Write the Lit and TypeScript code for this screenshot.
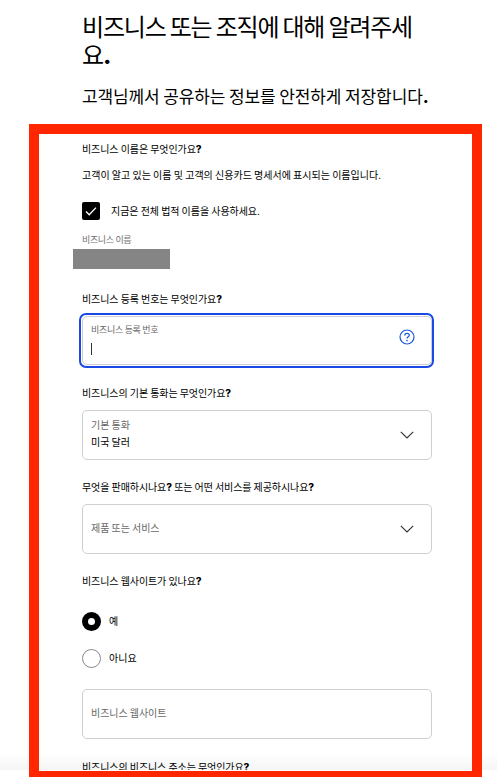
import { LitElement, html, css, svg, nothing } from "lit";
import { customElement, property } from "lit/decorators.js";

const textBase = css`
  * { box-sizing: border-box; }
  b { font-family: Inter, "Noto Sans CJK KR", sans-serif; font-weight: 800; line-height: 0; }
`;

@customElement("form-question")
class FormQuestion extends LitElement {
  @property() text = "";
  static styles = [textBase, css`
    :host { display: block; height: 20px; line-height: 20px; font-size: 10px; letter-spacing: -0.08px; color: #000; white-space: nowrap; }
  `];
  render() {
    return this.text.split(/(\?)/).map((part) => (part === "?" ? html`<b>?</b>` : part));
  }
}

@customElement("form-field")
class FormField extends LitElement {
  @property() label = "";
  @property() value = "";
  @property() icon = "";
  @property({ type: Boolean, reflect: true }) focused = false;
  static styles = [textBase, css`
    :host { display: block; }
    .box { position: relative; display: flex; align-items: center; justify-content: space-between; height: 50px; border: 1px solid #cfcfcf; border-radius: 5px; padding: 0 16px 0 8px; background: #fff; }
    :host([focused]) .box { height: 49px; }
    :host([focused]) .box::before { content: ""; position: absolute; inset: -4px -3px -4px -4px; border: 2px solid #1a49e6; border-radius: 7px; }
    .text { display: flex; flex-direction: column; padding-bottom: 3px; line-height: 17px; font-size: 10px; letter-spacing: -0.05px; white-space: nowrap; color: #000; }
    .filled { padding-bottom: 5px; }
    :host([focused]) .text { padding-bottom: 6px; }
    .label { color: #686868; }
    :host([focused]) .label { font-size: 9px; letter-spacing: -0.3px; }
    .caret { width: 1px; height: 12px; margin: 5px 0 0 0; background: #333; }
    svg { display: block; fill: none; }
    .chevron { stroke: #333; stroke-width: 1.15; }
    .help { stroke: #1557dc; stroke-width: 1.2; margin-top: -8px; }
    .dot { fill: #1557dc; stroke: none; }
  `];
  private glyph() {
    if (this.icon === "help")
      return html`<svg class="help" width="16" height="16" viewBox="0 0 16 16">${svg`<circle cx="8" cy="8" r="7"/><path d="M5.8 6.6V6.2C5.8 5 6.7 4.3 8 4.3S10.3 5.1 10.3 6.2C10.3 7.8 8 7.7 8 9.5"/><circle class="dot" cx="8" cy="11.6" r=".8"/>`}</svg>`;
    if (this.icon === "chevron")
      return html`<svg class="chevron" width="16" height="16" viewBox="0 0 16 16"><path d="M1.8 4.8 8 11l6.2-6.2"/></svg>`;
    return nothing;
  }
  render() {
    return html`<div class="box">
      <div class="text ${this.value ? "filled" : ""}">
        <span class="label">${this.label}</span>
        ${this.value ? html`<span>${this.value}</span>` : nothing}
        ${this.focused ? html`<span class="caret"></span>` : nothing}
      </div>
      ${this.glyph()}
    </div>`;
  }
}

@customElement("form-radio")
class FormRadio extends LitElement {
  @property() label = "";
  @property({ type: Boolean, reflect: true }) checked = false;
  static styles = [textBase, css`
    :host { display: flex; align-items: center; gap: 8px; height: 19px; font-size: 10px; line-height: 17px; }
    .ring { width: 19px; height: 19px; border: 1px solid #888; border-radius: 50%; background: #fff; }
    :host([checked]) .ring { border: 6px solid #000; }
    .label { padding-bottom: 2px; }
  `];
  render() {
    return html`<span class="ring"></span><span class="label">${this.label}</span>`;
  }
}

@customElement("app-root")
class AppRoot extends LitElement {
  static styles = [textBase, css`
    :host { display: block; position: relative; height: 777px; overflow: hidden; background: #fff; color: #000; font-family: "Noto Sans CJK KR", sans-serif; }
    .page { height: 770px; overflow: hidden; padding: 12px 65px 0 82px; background: linear-gradient(#fff 752px, #f6f6f6 770px); }
    h1, h2, p { margin: 0; font-weight: 400; white-space: nowrap; }
    h1 { font-size: 24px; line-height: 28px; letter-spacing: -1.2px; }
    h2 { margin-top: 18px; font-size: 17px; line-height: 20px; letter-spacing: -0.12px; }
    .first { margin-top: 33px; }
    .desc { margin-top: 6px; font-size: 10px; line-height: 20px; letter-spacing: 0; }
    .check { display: flex; align-items: center; gap: 11px; height: 18px; margin-top: 17px; font-size: 10px; line-height: 18px; letter-spacing: -0.05px; }
    .check span { padding-bottom: 1px; }
    .check svg { display: block; width: 18px; height: 18px; border-radius: 2px; background: #000; fill: none; stroke: #fff; stroke-width: 1.3; }
    .name { margin-top: 11px; height: 17px; font-size: 9px; line-height: 17px; letter-spacing: -0.35px; color: #707070; }
    .redacted { width: 97px; height: 20px; margin: 1px 0 0 -9px; background: #858585; }
    .q2 { margin-top: 20px; }
    .f2 { margin-top: 7px; }
    .q3 { margin-top: 18px; }
    .f3 { margin-top: 7px; }
    .q4 { margin-top: 17px; }
    .last { margin-top: 18px; }
    .radios { display: flex; flex-direction: column; gap: 18px; margin: 21px 0 21px; }
    .frame { position: absolute; left: 29px; top: 124px; width: 453px; height: 653px; border: 10px solid #ff2600; border-bottom-width: 6px; }
  `];
  render() {
    return html`
      <div class="page">
        <h1>비즈니스 또는 조직에 대해 알려주세<br>요<b>.</b></h1>
        <h2>고객님께서 공유하는 정보를 안전하게 저장합니다<b>.</b></h2>
        <form-question class="first" text="비즈니스 이름은 무엇인가요?"></form-question>
        <p class="desc">고객이 알고 있는 이름 및 고객의 신용카드 명세서에 표시되는 이름입니다.</p>
        <div class="check">
          <svg viewBox="0 0 18 18"><path d="M4 9.5 7.2 12.7 14 5.6"/></svg>
          <span>지금은 전체 법적 이름을 사용하세요.</span>
        </div>
        <div class="name">비즈니스 이름</div>
        <div class="redacted"></div>
        <form-question class="q2" text="비즈니스 등록 번호는 무엇인가요?"></form-question>
        <form-field class="f2" label="비즈니스 등록 번호" icon="help" focused></form-field>
        <form-question class="q3" text="비즈니스의 기본 통화는 무엇인가요?"></form-question>
        <form-field class="f3" label="기본 통화" value="미국 달러" icon="chevron"></form-field>
        <form-question class="q4" text="무엇을 판매하시나요? 또는 어떤 서비스를 제공하시나요?"></form-question>
        <form-field class="f3" label="제품 또는 서비스" icon="chevron"></form-field>
        <form-question class="q4" text="비즈니스 웹사이트가 있나요?"></form-question>
        <div class="radios">
          <form-radio label="예" checked></form-radio>
          <form-radio label="아니요"></form-radio>
        </div>
        <form-field label="비즈니스 웹사이트"></form-field>
        <form-question class="last" text="비즈니스의 비즈니스 주소는 무엇인가요?"></form-question>
      </div>
      <div class="frame"></div>
    `;
  }
}
